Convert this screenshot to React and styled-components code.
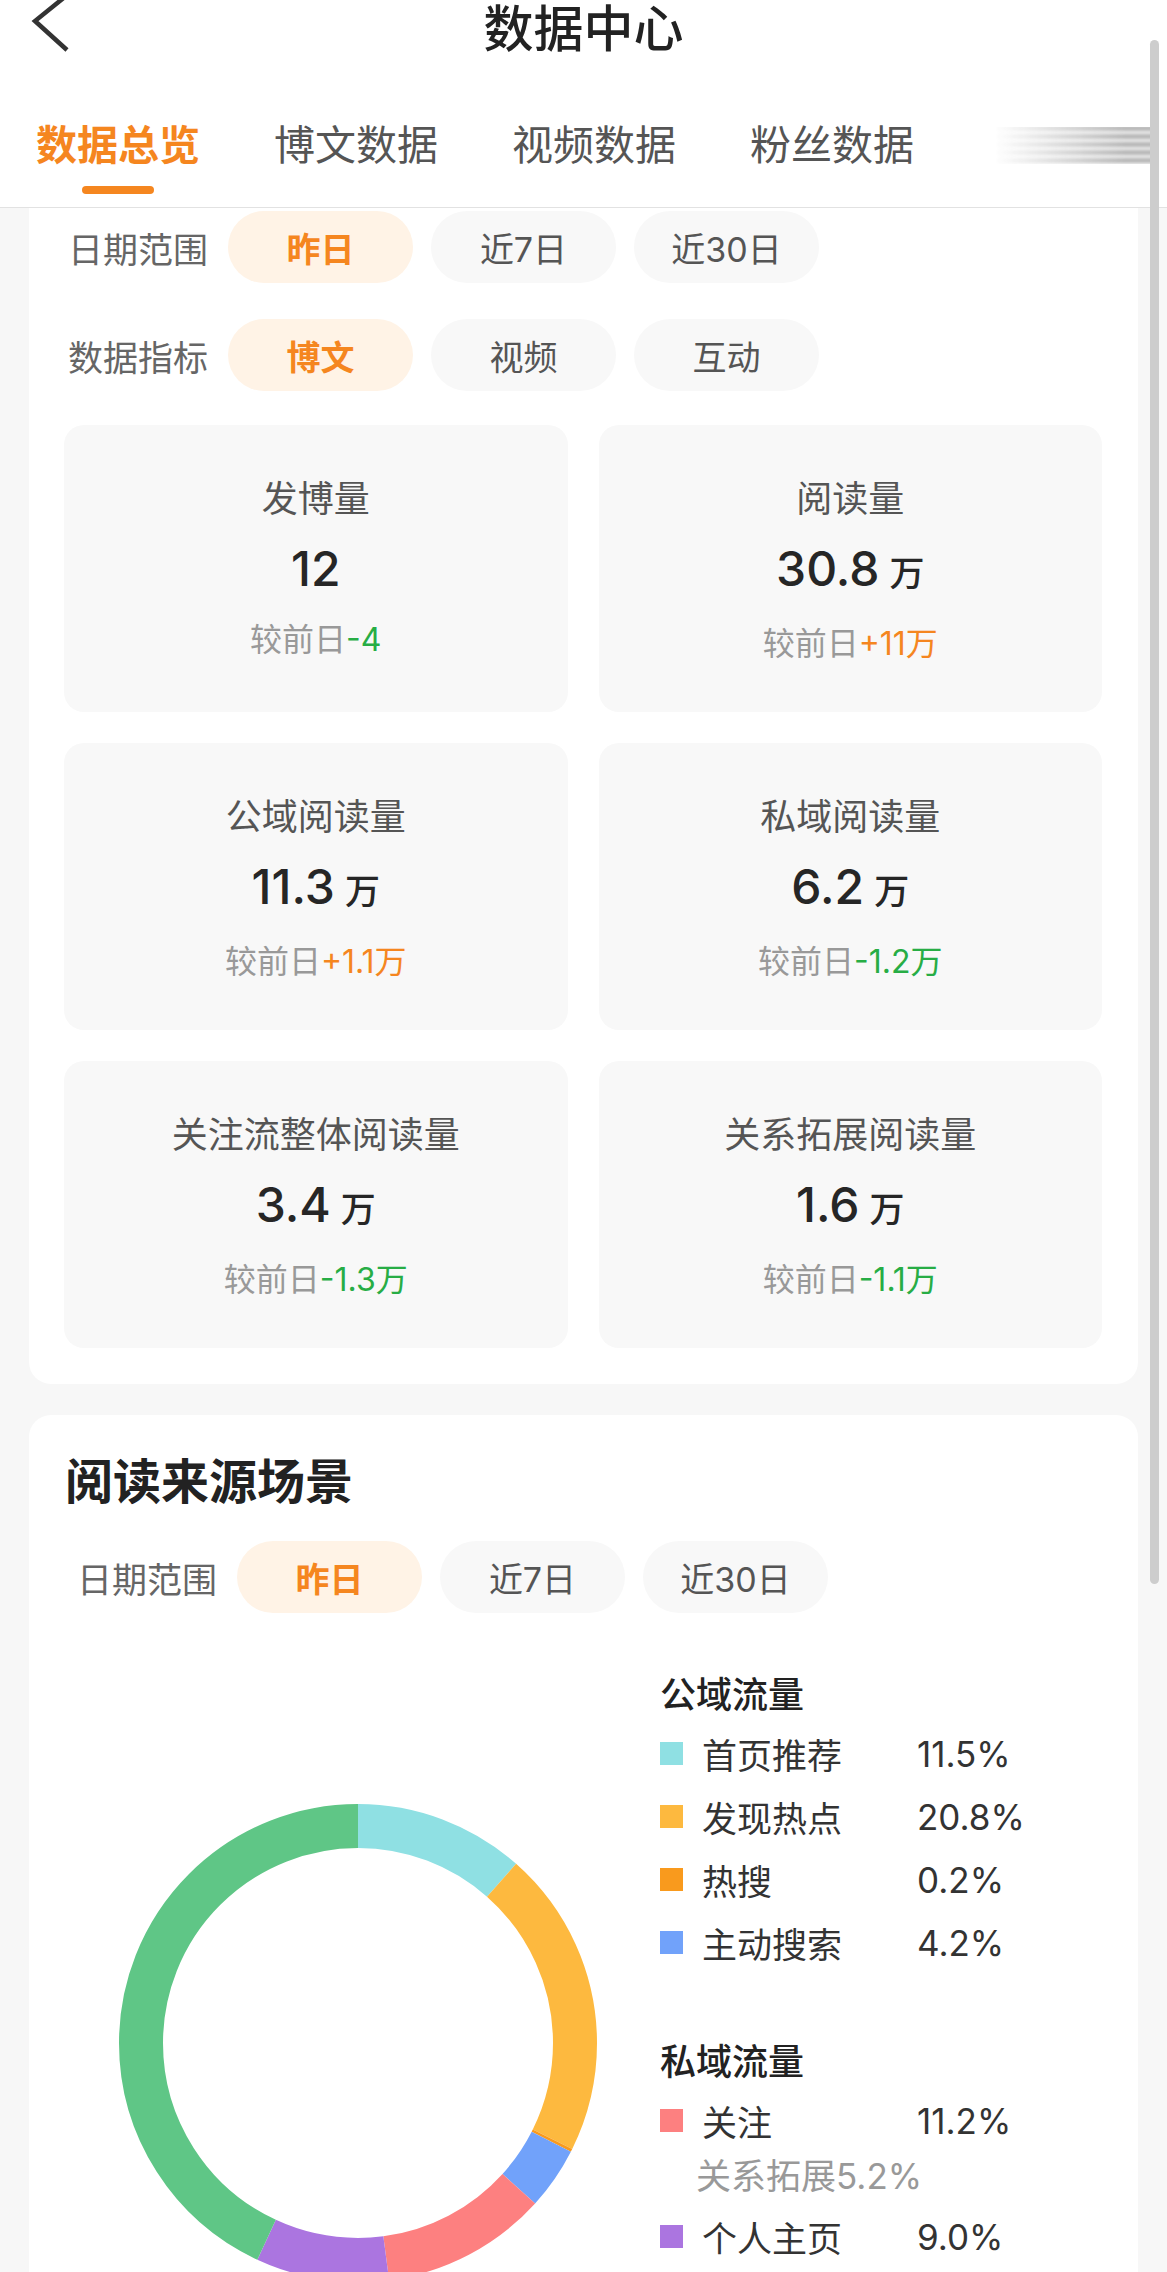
import React, { useState } from 'react';
import styled, { createGlobalStyle } from 'styled-components';

const GlobalStyle = createGlobalStyle`
  body {
    margin: 0;
    background: #f7f7f7;
    font-family: Inter, "Noto Sans CJK SC", sans-serif;
  }
`;

const ORANGE = '#f5861f';
const GREEN = '#27ad45';

const Page = styled.div`
  position: relative;
  width: 1167px;
  min-height: 100vh;
  overflow: hidden;
  background: #f7f7f7;
`;

const Header = styled.header`
  background: #fff;
  border-bottom: 1px solid #e2e2e2;
`;

const NavBar = styled.div`
  display: grid;
  grid-template-columns: 1fr auto 1fr;
  align-items: start;
  height: 55px;
`;

const BackButton = styled.div`
  padding-left: 30px;
  height: 55px;
`;

const Title = styled.h1`
  margin: 0;
  font-family: "Noto Sans CJK SC", sans-serif;
  font-size: 50px;
  line-height: 50px;
  font-weight: 500;
  color: #222;
`;

const TabBar = styled.nav`
  position: relative;
  display: flex;
  gap: 74px;
  padding: 66px 0 13px 36px;
`;

const Tab = styled.div`
  display: flex;
  flex-direction: column;
  align-items: center;
  font-size: 41px;
  line-height: 48px;
  font-weight: ${(p) => (p.$active ? 700 : 400)};
  color: ${(p) => (p.$active ? ORANGE : '#555')};
  white-space: nowrap;
`;

const Indicator = styled.span`
  width: 72px;
  height: 8px;
  margin-top: 17px;
  border-radius: 4px;
  background: ${(p) => (p.$active ? ORANGE : 'transparent')};
`;

const MoreFade = styled.div`
  position: absolute;
  right: 8px;
  top: 72px;
  width: 165px;
  height: 37px;
  background: repeating-linear-gradient(to bottom, #555 0 3px, transparent 3px 8px);
  filter: blur(2px);
  opacity: 0.8;
  mask-image: linear-gradient(to right, transparent, #000 80%);
  -webkit-mask-image: linear-gradient(to right, transparent, #000 80%);
`;

const ScrollBar = styled.div`
  position: absolute;
  top: 40px;
  right: 8px;
  width: 9px;
  height: 1544px;
  border-radius: 5px;
  background: #cdcdcd;
`;

const Content = styled.main`
  display: flex;
  flex-direction: column;
  gap: 31px;
  padding: 0 29px;
`;

const Panel = styled.section`
  background: #fff;
  border-radius: ${(p) => (p.$flatTop ? '0 0 22px 22px' : '22px')};
  padding: ${(p) => p.$pad};
`;

const Filters = styled.div`
  display: flex;
  flex-direction: column;
  gap: 36px;
`;

const FilterRow = styled.div`
  display: flex;
  align-items: center;
  gap: 18px;
  padding-left: ${(p) => p.$indent}px;
`;

const FilterLabel = styled.span`
  width: 140px;
  margin-right: 2px;
  font-size: 35px;
  color: #666;
  white-space: nowrap;
`;

const Pill = styled.button`
  width: 185px;
  height: 72px;
  border: none;
  border-radius: 36px;
  display: flex;
  align-items: center;
  justify-content: center;
  font-family: inherit;
  font-size: 34px;
  font-weight: ${(p) => (p.$active ? 600 : 400)};
  color: ${(p) => (p.$active ? ORANGE : '#555')};
  background: ${(p) => (p.$active ? '#fff3e6' : '#f8f8f8')};
  cursor: pointer;
`;

const StatsGrid = styled.div`
  display: grid;
  grid-template-columns: 1fr 1fr;
  gap: 31px;
  margin-top: 34px;
`;

const StatCard = styled.div`
  height: 287px;
  box-sizing: border-box;
  padding-top: 50px;
  border-radius: 20px;
  background: #f8f8f8;
  display: flex;
  flex-direction: column;
  align-items: center;
`;

const StatTitle = styled.div`
  font-size: 36px;
  line-height: 48px;
  color: #555;
`;

const StatValue = styled.div`
  margin-top: 16px;
  font-size: 48px;
  line-height: 60px;
  font-weight: 500;
  color: #262626;
`;

const Unit = styled.span`
  margin-left: 10px;
  font-size: 35px;
`;

const StatDelta = styled.div`
  margin-top: 19px;
  font-size: 32px;
  line-height: 44px;
  color: #999;
`;

const DeltaNum = styled.span`
  color: ${(p) => (p.$up ? ORANGE : GREEN)};
`;

const SectionTitle = styled.h2`
  margin: 0 0 33px;
  font-family: "Noto Sans CJK SC", sans-serif;
  font-size: 48px;
  line-height: 60px;
  font-weight: 700;
  color: #222;
`;

const ChartRow = styled.div`
  display: flex;
  align-items: flex-start;
  margin-top: 55px;
  padding-left: 54px;
`;

const DonutWrap = styled.div`
  flex-shrink: 0;
  width: 478px;
  height: 478px;
  margin-top: 136px;
`;

const Legend = styled.div`
  margin-left: 63px;
  display: flex;
  flex-direction: column;
`;

const LegendHeading = styled.div`
  margin: ${(p) => (p.$first ? '0' : '61px')} 0 6px;
  font-family: "Noto Sans CJK SC", sans-serif;
  font-size: 36px;
  line-height: 48px;
  font-weight: 500;
  color: #222;
`;

const LegendItem = styled.div`
  display: flex;
  align-items: center;
  height: 63px;
`;

const Swatch = styled.span`
  width: 23px;
  height: 23px;
  margin-right: 19px;
  background: ${(p) => p.$color};
`;

const LegendName = styled.span`
  width: 215px;
  font-size: 35px;
  color: #333;
`;

const LegendPct = styled.span`
  font-size: 35px;
  color: #333;
`;

const SubNote = styled.div`
  padding-left: 36px;
  margin-bottom: 5px;
  font-size: 35px;
  line-height: 48px;
  color: #999;
`;

const tabs = ['数据总览', '博文数据', '视频数据', '粉丝数据'];

const stats = [
  { title: '发博量', value: '12', unit: '', delta: '-4', up: false },
  { title: '阅读量', value: '30.8', unit: '万', delta: '+11万', up: true },
  { title: '公域阅读量', value: '11.3', unit: '万', delta: '+1.1万', up: true },
  { title: '私域阅读量', value: '6.2', unit: '万', delta: '-1.2万', up: false },
  { title: '关注流整体阅读量', value: '3.4', unit: '万', delta: '-1.3万', up: false },
  { title: '关系拓展阅读量', value: '1.6', unit: '万', delta: '-1.1万', up: false },
];

const segments = [
  { name: '首页推荐', pct: 11.5, color: '#8fe0e3' },
  { name: '发现热点', pct: 20.8, color: '#fdb93f' },
  { name: '热搜', pct: 0.2, color: '#f99a1d' },
  { name: '主动搜索', pct: 4.2, color: '#71a2fa' },
  { name: '关注', pct: 11.2, color: '#fd8080' },
  { name: '个人主页', pct: 9.0, color: '#ab75e0' },
  { name: '其他', pct: 43.1, color: '#5fc686' },
];

const Donut = () => {
  const r = 217;
  const c = 2 * Math.PI * r;
  let acc = 0;
  return (
    <svg width="478" height="478" viewBox="0 0 478 478">
      <g transform="rotate(-90 239 239)">
        {segments.map((s) => {
          const len = (s.pct / 100) * c;
          const el = (
            <circle
              key={s.name}
              cx="239"
              cy="239"
              r={r}
              fill="none"
              stroke={s.color}
              strokeWidth="44"
              strokeDasharray={`${len} ${c - len}`}
              strokeDashoffset={-acc}
            />
          );
          acc += len;
          return el;
        })}
      </g>
    </svg>
  );
};

const PillGroup = ({ label, options, indent }) => {
  const [active, setActive] = useState(0);
  return (
    <FilterRow $indent={indent}>
      <FilterLabel>{label}</FilterLabel>
      {options.map((o, i) => (
        <Pill key={o} $active={i === active} onClick={() => setActive(i)}>
          {o}
        </Pill>
      ))}
    </FilterRow>
  );
};

const legendRow = (s) => (
  <LegendItem key={s.name}>
    <Swatch $color={s.color} />
    <LegendName>{s.name}</LegendName>
    <LegendPct>{s.pct.toFixed(1)}%</LegendPct>
  </LegendItem>
);

const App = () => {
  const [tab, setTab] = useState(0);

  return (
    <Page>
      <GlobalStyle />
      <Header>
        <NavBar>
          <BackButton>
            <svg width="40" height="55" viewBox="0 0 40 55">
              <polyline points="36,-4 5,21 37,50" fill="none" stroke="#333" strokeWidth="4.5" />
            </svg>
          </BackButton>
          <Title>数据中心</Title>
          <div />
        </NavBar>
        <TabBar>
          {tabs.map((t, i) => (
            <Tab key={t} $active={i === tab} onClick={() => setTab(i)}>
              {t}
              <Indicator $active={i === tab} />
            </Tab>
          ))}
          <MoreFade />
        </TabBar>
      </Header>

      <Content>
        <Panel $flatTop $pad="3px 36px 36px 35px">
          <Filters>
            <PillGroup label="日期范围" options={['昨日', '近7日', '近30日']} indent={4} />
            <PillGroup label="数据指标" options={['博文', '视频', '互动']} indent={4} />
          </Filters>
          <StatsGrid>
            {stats.map((s) => (
              <StatCard key={s.title}>
                <StatTitle>{s.title}</StatTitle>
                <StatValue>
                  {s.value}
                  {s.unit && <Unit>{s.unit}</Unit>}
                </StatValue>
                <StatDelta>
                  较前日<DeltaNum $up={s.up}>{s.delta}</DeltaNum>
                </StatDelta>
              </StatCard>
            ))}
          </StatsGrid>
        </Panel>

        <Panel $pad="33px 36px 40px 36px">
          <SectionTitle>阅读来源场景</SectionTitle>
          <PillGroup label="日期范围" options={['昨日', '近7日', '近30日']} indent={12} />
          <ChartRow>
            <DonutWrap>
              <Donut />
            </DonutWrap>
            <Legend>
              <LegendHeading $first>公域流量</LegendHeading>
              {segments.slice(0, 4).map(legendRow)}
              <LegendHeading>私域流量</LegendHeading>
              {legendRow(segments[4])}
              <SubNote>关系拓展5.2%</SubNote>
              {legendRow(segments[5])}
            </Legend>
          </ChartRow>
        </Panel>
      </Content>
      <ScrollBar />
    </Page>
  );
};

export default App;
